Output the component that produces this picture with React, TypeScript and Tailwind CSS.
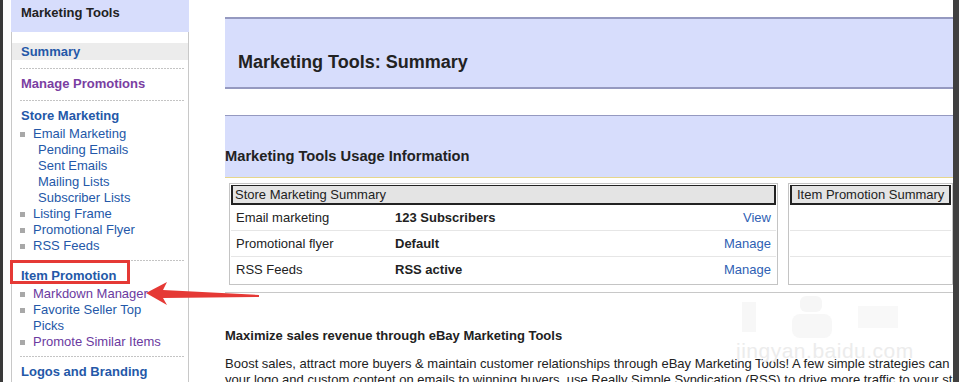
import React from "react";

/* ---- sidebar bits ---- */
function Dots({ className = "" }: { className?: string }) {
  return <div className={`ml-[8px] mr-[4px] h-px bg-[linear-gradient(to_right,#c4c4c4_2px,transparent_2px)] bg-[length:3px_1px] ${className}`} />;
}

function Heading({ children, purple }: { children: React.ReactNode; purple?: boolean }) {
  return (
    <div className={`mt-[7px] pl-[9px] text-[13px] font-bold leading-[16px] ${purple ? "text-[#7a3ea2]" : "text-[#2458a8]"}`}>{children}</div>
  );
}

type Item = { label: string; sub?: boolean; purple?: boolean };

function Items({ items }: { items: Item[] }) {
  return (
    <ul className="mt-[2px]">
      {items.map((it) =>
        it.sub ? (
          <li key={it.label} className="pl-[26px] leading-[16px] text-[#2458a8]">{it.label}</li>
        ) : (
          <li key={it.label} className="flex items-start pl-[8px] leading-[16px]">
            <span className="mt-[6px] size-[5px] shrink-0 bg-[#a8a8a8]" />
            <span className={`ml-[8px] max-w-[134px] ${it.purple ? "text-[#6b3aa0]" : "text-[#2458a8]"}`}>{it.label}</span>
          </li>
        )
      )}
    </ul>
  );
}

function Sidebar() {
  return (
    <div className="flex w-[178px] shrink-0 flex-col">
      <div className="h-[32px] shrink-0 bg-[#d7ddfc] pl-[10px] pt-[5px] text-[13px] font-bold leading-[16px] text-[#222]">Marketing Tools</div>
      <div className="flex-1 border-x border-[#c8c8c8] pt-[11px]">
        <div className="h-[17px] bg-[#ececec] pl-[9px] font-bold leading-[17px] text-[#2458a8]">Summary</div>
        <Dots className="mt-[8px]" />
        <Heading purple>Manage Promotions</Heading>
        <Dots className="mt-[8px]" />
        <Heading>Store Marketing</Heading>
        <Items
          items={[
            { label: "Email Marketing" },
            { label: "Pending Emails", sub: true },
            { label: "Sent Emails", sub: true },
            { label: "Mailing Lists", sub: true },
            { label: "Subscriber Lists", sub: true },
            { label: "Listing Frame" },
            { label: "Promotional Flyer" },
            { label: "RSS Feeds" },
          ]}
        />
        <Dots className="mt-[6px]" />
        <Heading>Item Promotion</Heading>
        <Items
          items={[
            { label: "Markdown Manager", purple: true },
            { label: "Favorite Seller Top Picks" },
            { label: "Promote Similar Items", purple: true },
          ]}
        />
        <Dots className="mt-[6px]" />
        <Heading>Logos and Branding</Heading>
      </div>
    </div>
  );
}

/* ---- summary tables ---- */
const ROWS = [
  { label: "Email marketing", value: "123 Subscribers", link: "View" },
  { label: "Promotional flyer", value: "Default", link: "Manage" },
  { label: "RSS Feeds", value: "RSS active", link: "Manage" },
];

function SummaryTable({ title, rows, className = "" }: { title: string; rows?: typeof ROWS; className?: string }) {
  return (
    <div className={`border border-[#c4c4c4] p-px ${className}`}>
      <div className="h-[20px] border-b-2 border-l-2 border-r-2 border-t border-[#222] bg-[#e4e4e4] pl-[2px] pt-px leading-[16px] text-[#222]">{title}</div>
      {[0, 1, 2].map((i) => {
        const r = rows?.[i];
        return (
          <div key={i} className={`flex h-[26px] items-center px-[5px] ${i < 2 ? "border-b border-[#e6e6e6]" : ""}`}>
            {r && (
              <>
                <span className="w-[159px] text-[#222]">{r.label}</span>
                <span className="font-bold text-[#222]">{r.value}</span>
                <span className="ml-auto text-[#2f5fb3]">{r.link}</span>
              </>
            )}
          </div>
        );
      })}
    </div>
  );
}

function Main() {
  return (
    <div className="flex min-w-0 flex-1 flex-col overflow-hidden pl-[36px] pt-[17px]">
      <div className="h-[72px] shrink-0 border-y-2 border-[#9599c0] bg-[#d7ddfc] pl-[13px] pt-[32px] text-[18px] font-bold leading-[22px] text-[#222]">
        Marketing Tools: Summary
      </div>
      <div className="mt-[26px] h-[63px] shrink-0 border-b border-t border-b-[#e6d68c] border-t-[#9599c0] bg-[#d7ddfc] pt-[30px] text-[14.7px] font-bold leading-[20px] text-[#222]">
        Marketing Tools Usage Information
      </div>
      <div className="mt-[5px] flex shrink-0 gap-[10px] pl-[4px]">
        <SummaryTable title="Store Marketing Summary" rows={ROWS} className="w-[549px]" />
        <SummaryTable title="Item Promotion Summary" className="flex-1 [&>div:first-child]:pl-[5px]" />
      </div>
      <div className="mt-[7px] h-px shrink-0 bg-[#c8c8c8]" />
      <div className="mt-[35px] shrink-0 font-bold leading-[16px] text-[#222]">Maximize sales revenue through eBay Marketing Tools</div>
      <div className="mt-[12px] shrink-0 whitespace-nowrap leading-[16px] text-[#222]">
        <div>Boost sales, attract more buyers &amp; maintain customer relationships through eBay Marketing Tools! A few simple strategies can help you succeed.</div>
        <div>your logo and custom content on emails to winning buyers, use Really Simple Syndication (RSS) to drive more traffic to your store.</div>
      </div>
    </div>
  );
}

export default function App() {
  return (
    <div className="relative flex h-[382px] w-[959px] overflow-hidden bg-white font-['Liberation_Sans',Arial,sans-serif] text-[13px] text-[#222]">
      <div className="w-[3px] shrink-0 bg-[#3a3a3a]" />
      <div className="w-[8px] shrink-0" />
      <Sidebar />
      <Main />
      <div className="w-[6px] shrink-0 bg-[#404040]" />

      {/* annotation: red box + arrow */}
      <div className="pointer-events-none absolute left-[10px] top-[260px] h-[24px] w-[120px] border-[3px] border-[#e53935]" />
      <svg className="pointer-events-none absolute left-0 top-0" width="959" height="382">
        <polygon points="146,293 167,282 163,290 259,295 259,297 163,298 167,305" fill="#e53935" />
      </svg>

      {/* watermark */}
      <svg className="pointer-events-none absolute left-[740px] top-[296px]" width="170" height="46">
        <rect x="2" y="6" width="14" height="30" fill="#f7f7f7" />
        <rect x="60" y="0" width="22" height="16" rx="6" fill="#f6f6f6" />
        <rect x="52" y="18" width="40" height="24" rx="8" fill="#f7f7f7" />
        <rect x="118" y="10" width="40" height="22" fill="#f8f8f8" />
      </svg>
      <div className="pointer-events-none absolute left-[736px] top-[340px] text-[21px] leading-[22px] tracking-[0.5px] text-[#ececec]">jingyan.baidu.com</div>
    </div>
  );
}
